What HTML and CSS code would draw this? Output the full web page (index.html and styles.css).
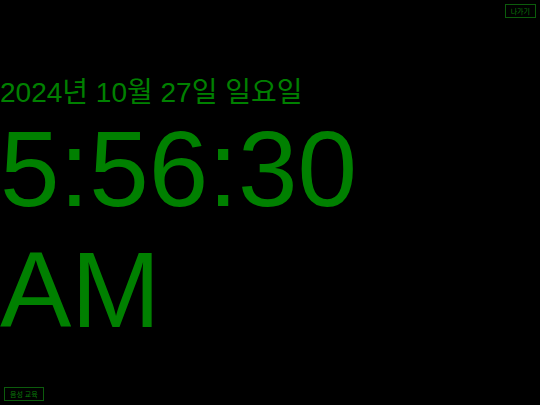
FILE: index.html
```html
<!DOCTYPE html>
<html lang="ko">
<head>
<meta charset="utf-8">
<link rel="stylesheet" href="styles.css">
</head>
<body>
<div class="screen">
  <button class="btn btn-exit">나가기</button>
  <main class="clock">
    <div class="date">2024년 10월 27일 일요일</div>
    <div class="time">5:56:30 AM</div>
  </main>
  <button class="btn btn-edu">음성 교육</button>
</div>
</body>
</html>
```
FILE: styles.css
```css
html, body {
  margin: 0;
  padding: 0;
  background: #000;
}
.screen {
  width: 540px;
  height: 405px;
  position: relative;
  display: flex;
  flex-direction: column;
  justify-content: center;
  background: #000;
  font-family: "Liberation Sans", "Noto Sans CJK KR", sans-serif;
  color: #008000;
  overflow: hidden;
}
.clock {
  display: flex;
  flex-direction: column;
  margin-top: 22px;
}
.date {
  font-size: 28px;
  line-height: 32px;
}
.time {
  font-size: 107px;
  line-height: 121px;
  width: 420px;
}
.btn {
  position: absolute;
  background: #000;
  color: #0a7a0a;
  border: 1px solid #0c5c0c;
  font-family: "Noto Sans CJK KR", sans-serif;
  font-size: 7px;
  line-height: 8px;
  padding: 2px 5px;
}
.btn-exit {
  top: 4px;
  right: 4px;
}
.btn-edu {
  bottom: 4px;
  left: 4px;
}
```
